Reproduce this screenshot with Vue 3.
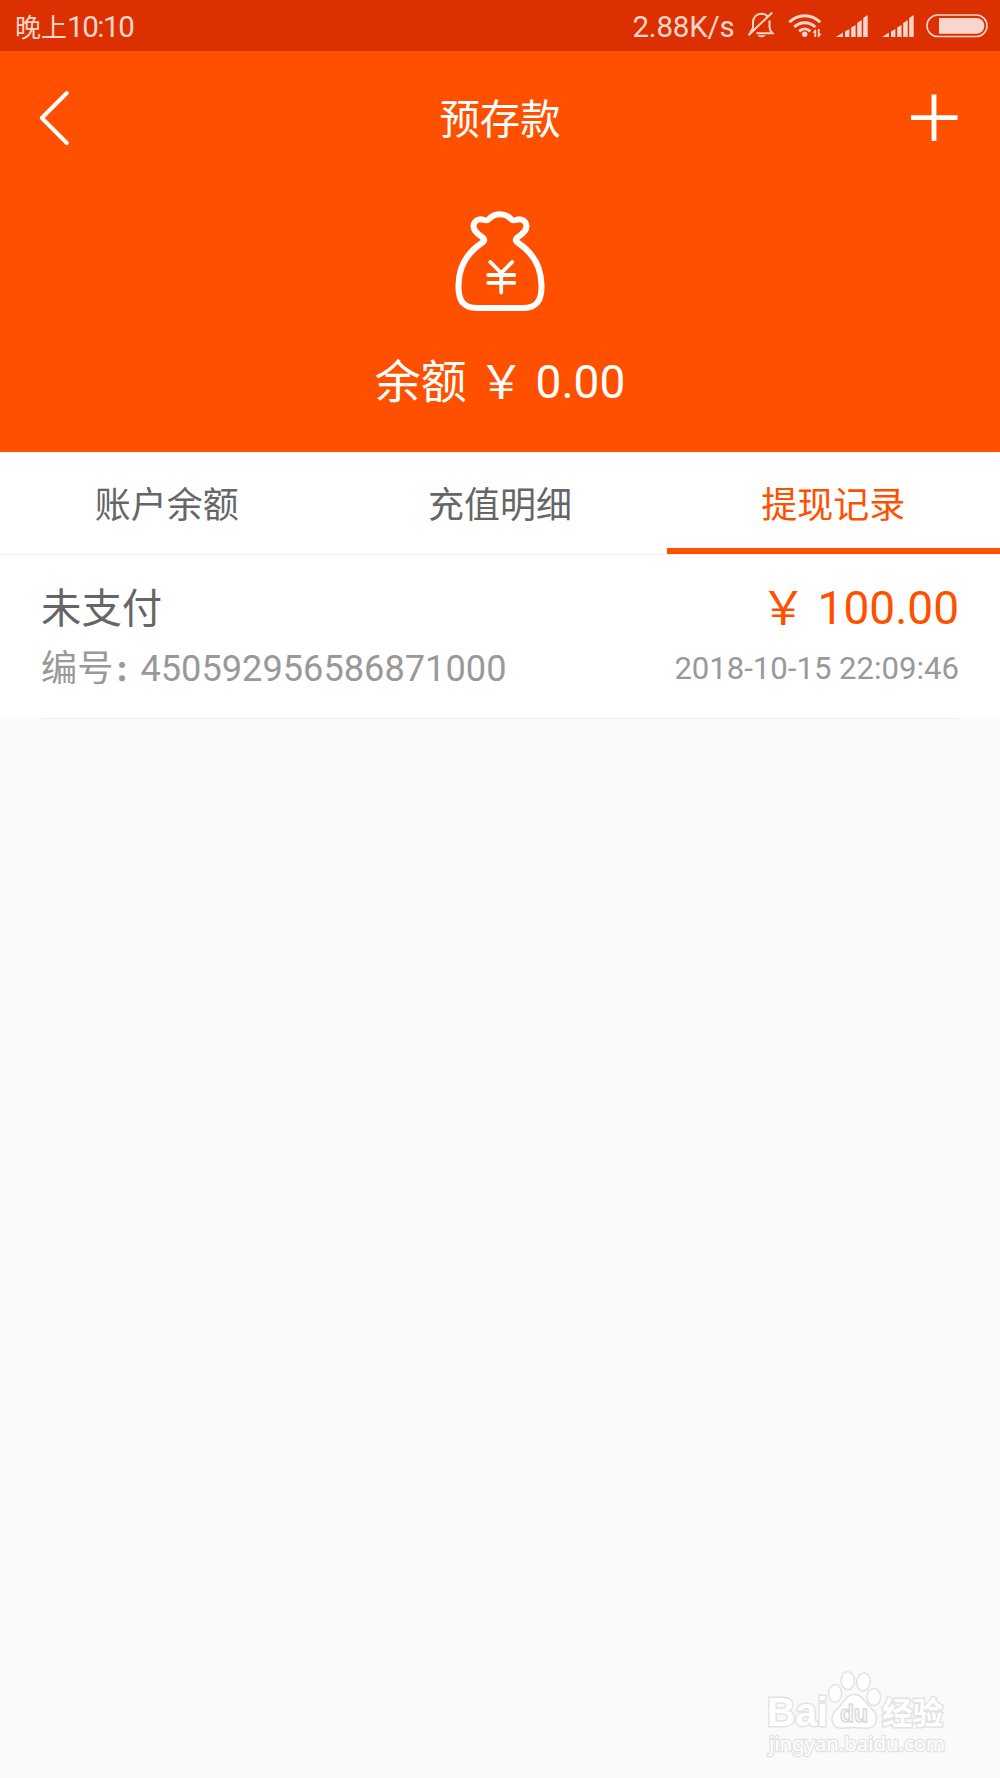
<script setup>
const tabs = [
  { label: '账户余额', active: false },
  { label: '充值明细', active: false },
  { label: '提现记录', active: true },
]
const records = [
  { status: '未支付', amount: '100.00', number: '450592956586871000', time: '2018-10-15 22:09:46' },
]
const signals = [0, 1]
</script>

<template>
  <div class="screen">
    <div class="status-bar">
      <span class="clock">晚上<span class="latin">10:10</span></span>
      <div class="indicators">
        <span class="speed">2.88K/s</span>
        <svg class="bell" width="28" height="28" viewBox="0 0 28 28" fill="none" stroke="currentColor" stroke-width="2">
          <path d="M6 17V11.5C6 6 9.5 2.8 14.2 2.8C17 2.8 19 3.7 20.4 5.2M22.5 9.5V16C22.5 19 23.5 20.3 25.5 22.3H9.5" />
          <path d="M1.5 24.3L25.2 1.5M3 22L6 17" />
          <path d="M10.5 24.2H18.5C17.5 26.8 11.5 26.8 10.5 24.2Z" fill="currentColor" stroke="none" />
        </svg>
        <svg class="wifi" width="34" height="26" viewBox="0 0 34 26" fill="none" stroke="currentColor" stroke-width="3">
          <path d="M1.3 9.2C10 .5 23.5 .5 32.2 9.2" />
          <path d="M6.2 14C12 8.3 21.5 8.3 27.3 14" />
          <path d="M11.2 18.4C14.5 15.2 19 15.2 22.3 18.4" />
          <circle cx="16.7" cy="21.2" r="2.7" fill="currentColor" stroke="none" />
          <path d="M27.3 24V17M30.7 16V23" stroke-width="1.8" />
          <path d="M24.3 19.8L28 16V19.8ZM30 20.7V25L33.7 20.7Z" fill="currentColor" stroke="none" />
        </svg>
        <svg v-for="s in signals" :key="s" class="signal" width="32" height="23" viewBox="0 0 32 23" fill="currentColor">
          <path d="M0 22L7 17.5V22ZM9 16.5L13.4 14V22H9ZM15.2 12.5L19.6 10V22H15.2ZM21.2 8L25.7 5V22H21.2ZM27.2 3L31.7 0V22H27.2Z" />
        </svg>
        <svg class="battery" width="62" height="24" viewBox="0 0 62 24">
          <rect x="1" y="1" width="60" height="21.5" rx="10.7" fill="none" stroke="currentColor" stroke-width="1.6" />
          <path d="M13 4H50.5A7.8 7.8 0 0 1 50.5 19.7H13Z" fill="currentColor" />
        </svg>
      </div>
    </div>

    <header class="hero">
      <div class="nav">
        <svg class="back" width="32" height="58" viewBox="0 0 32 58" fill="none" stroke="#fff" stroke-width="4" stroke-linecap="round" stroke-linejoin="round">
          <path d="M28.8 4L3.8 29L28.8 54" />
        </svg>
        <h1>预存款</h1>
        <svg class="plus" width="48" height="48" viewBox="0 0 48 48" stroke="#fff" stroke-width="4.8">
          <path d="M24 .5V47M1 23.7H47.5" />
        </svg>
      </div>
      <svg class="bag" width="92" height="102" viewBox="0 0 92 102" fill="none" stroke="#fff" stroke-width="6" stroke-linecap="round" stroke-linejoin="round">
        <path d="M28 31.7C32 29 29.7 27 27.4 25.6C20.5 21 18 17 20.3 12C22.2 8.2 26.5 7.7 30.2 9C34 10.2 34.5 8.5 37 6.2C42 2.4 50 2.4 55 6.2C57.5 8.5 58 10.2 61.8 9C65.5 7.7 69.8 8.2 71.7 12C74 17 71.5 21 64.6 25.6C62.3 27 60 29 64 31.7C80 42.5 87.3 57 87.5 74C88 91 81.5 97 69 97H23C10.5 97 4 91 4.5 74C4.7 57 12 42.5 28 31.7Z" />
        <path d="M36.3 51L47.2 62L58.2 51M47.2 62V81.5M34.3 64H60.3M34.3 71.8H60.3" stroke-width="3.8" />
      </svg>
      <div class="balance">余额 ￥ 0.00</div>
    </header>

    <nav class="tabs">
      <div v-for="t in tabs" :key="t.label" class="tab" :class="{ active: t.active }">{{ t.label }}</div>
    </nav>

    <main class="records">
      <article v-for="r in records" :key="r.number" class="record">
        <div class="row primary">
          <span class="state">{{ r.status }}</span>
          <span class="amount">￥ {{ r.amount }}</span>
        </div>
        <div class="row secondary">
          <span class="number">编号<span class="colon">：</span>{{ r.number }}</span>
          <time>{{ r.time }}</time>
        </div>
      </article>
    </main>

    <svg class="watermark" width="190" height="90" viewBox="0 0 190 90">
      <g fill="#fff" stroke="#e3e3e3" stroke-width="1.6">
        <text x="4" y="56" font-family="'Liberation Sans', sans-serif" font-weight="700" paint-order="stroke" stroke-width="3" font-size="40" textLength="61" lengthAdjust="spacingAndGlyphs">Bai</text>
        <ellipse cx="72" cy="23.5" rx="6.6" ry="9" />
        <ellipse cx="84.8" cy="10.7" rx="6.8" ry="9" />
        <ellipse cx="100.5" cy="12" rx="6.8" ry="9" transform="rotate(10 100.5 12)" />
        <ellipse cx="110.8" cy="27" rx="6.8" ry="8.5" />
        <path d="M91 24.5C99 24.5 101 31 107 37C113 43 115 47 112.5 53C109 61 99 57.5 91 57.5C83 57.5 74 61 70 53.5C67 47 70 42 76 37C82 31 83 24.5 91 24.5Z" />
        <text x="77" y="52" font-family="'Liberation Sans', sans-serif" font-weight="700" font-size="24" fill="#fafafa" stroke="#d9d9d9" stroke-width="1.4" textLength="28" lengthAdjust="spacingAndGlyphs">du</text>
        <text x="119" y="53.5" font-family="'Noto Sans CJK SC', sans-serif" font-weight="700" font-size="31" paint-order="stroke" stroke-width="3" textLength="61" lengthAdjust="spacingAndGlyphs">经验</text>
        <text x="6" y="80.5" font-family="'Noto Sans', sans-serif" font-size="20.5" paint-order="stroke" stroke-width="2.6" textLength="176" lengthAdjust="spacingAndGlyphs">jingyan.baidu.com</text>
      </g>
    </svg>
  </div>
</template>

<style>
body {
  margin: 0;
  background: #fafafa;
}
</style>

<style scoped>
.screen {
  position: relative;
  width: 1000px;
  height: 1778px;
  overflow: hidden;
  background: #fafafa;
  color: #666;
  font-family: Roboto, 'Noto Sans CJK SC', sans-serif;
}
.status-bar {
  box-sizing: border-box;
  height: 51px;
  padding: 0 12px 0 15px;
  display: flex;
  justify-content: space-between;
  background: #dd3000;
  color: #f8d6cc;
  line-height: 54px;
}
.clock {
  font-size: 26px;
}
.latin {
  font-size: 29.5px;
  letter-spacing: -1.4px;
}
.indicators {
  display: flex;
  align-items: flex-start;
}
.speed {
  font-size: 29.5px;
  letter-spacing: -0.2px;
  margin-right: 12.5px;
}
.bell {
  margin: 11px 13px 0 0;
}
.wifi {
  margin: 13px 14px 0 0;
}
.signal {
  margin: 15px 14px 0 0;
}
.battery {
  margin: 14px 0 0 -2px;
}
.hero {
  height: 401px;
  display: flex;
  flex-direction: column;
  align-items: center;
  background: #ff5000;
  color: #fff;
}
.nav {
  box-sizing: border-box;
  width: 100%;
  height: 133px;
  padding: 0 42px 0 38px;
  display: flex;
  align-items: center;
  justify-content: space-between;
}
h1 {
  margin: 6px 0 0 20px;
  font-size: 40.4px;
  line-height: 60px;
  font-weight: 400;
}
.bag {
  margin-top: 27px;
}
.balance {
  margin-top: 33px;
  font-size: 46px;
  line-height: 72px;
}
.tabs {
  display: flex;
  height: 102px;
  background: #fff;
  border-bottom: 1px solid #f0f0f0;
}
.tab {
  box-sizing: border-box;
  flex: 1;
  text-align: center;
  font-size: 36px;
  line-height: 109px;
}
.tab.active {
  color: #ff5000;
  border-bottom: 6px solid #ff5000;
}
.records {
  padding: 0 41px;
  background: #fff;
}
.record {
  box-sizing: border-box;
  height: 164px;
  padding-top: 22px;
  border-bottom: 1px solid #f0f0f0;
}
.row {
  display: flex;
  justify-content: space-between;
}
.primary {
  height: 62px;
  line-height: 63px;
}
.state {
  font-size: 40.4px;
  line-height: 65px;
}
.amount {
  font-size: 46px;
  color: #ff5000;
}
.secondary {
  height: 56px;
  line-height: 60px;
  color: #999;
}
.number {
  font-size: 36.2px;
}
.colon {
  margin: 0 -2.5px 0 1.5px;
  font-size: 28px;
  font-weight: 900;
}
time {
  font-size: 31.1px;
}
.watermark {
  position: absolute;
  left: 763px;
  top: 1670px;
}
</style>
